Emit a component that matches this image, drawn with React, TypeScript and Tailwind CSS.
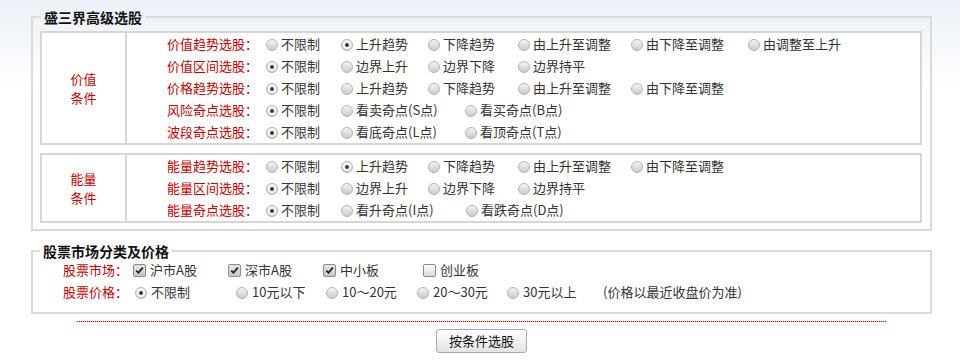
import React from 'react';

type Opt = [string, string];

interface CondRowProps {
  label: string;
  options: Opt[];
  checked: number;
}

const Radio: React.FC<{ checked?: boolean }> = ({ checked }) => (
  <span className="mr-[3px] mt-[2px] flex h-[12px] w-[12px] shrink-0 items-center justify-center rounded-full border border-[#b4b4b4] bg-linear-to-b from-[#f4f4f4] to-[#cbcbcb]">
    {checked && (
      <span className="flex h-[8px] w-[8px] items-center justify-center rounded-full bg-[#f6f6f6]">
        <span className="h-[4px] w-[4px] rounded-full bg-[#3c3c3c]" />
      </span>
    )}
  </span>
);

const Checkbox: React.FC<{ checked?: boolean }> = ({ checked }) => (
  <span
    className={`mr-[4px] mt-[1px] flex h-[13px] w-[13px] shrink-0 items-center justify-center rounded-[2px] border border-[#8c8c8c] bg-linear-to-b ${
      checked ? 'from-[#e6e6e6] to-[#c6c6c6]' : 'from-[#fbfbfb] to-[#dcdcdc]'
    }`}
  >
    {checked && (
      <svg width="9" height="9" viewBox="0 0 9 9">
        <path d="M1.3 4.6 L3.5 6.8 L7.8 1.6" stroke="#1e1e1e" strokeWidth="1.7" fill="none" />
      </svg>
    )}
  </span>
);

const CondRow: React.FC<CondRowProps> = ({ label, options, checked }) => (
  <div className="flex h-[22px] items-center whitespace-nowrap">
    <span className="w-[139px] shrink-0 pr-[8px] text-right text-[#cc0000]">{label}</span>
    {options.map(([text, w], i) => (
      <label key={text} className={`flex shrink-0 items-center ${w}`}>
        <Radio checked={i === checked} />
        <span>{text}</span>
      </label>
    ))}
  </div>
);

const CondGroup: React.FC<{ title: string[]; rows: CondRowProps[]; className?: string }> = ({
  title,
  rows,
  className = '',
}) => (
  <div className={`flex border-2 border-[#d6d6d6] bg-white ${className}`}>
    <div className="flex w-[85px] shrink-0 flex-col items-center justify-center border-r-2 border-[#d6d6d6] text-[#cc0000]">
      {title.map(t => (
        <span key={t} className="h-[19px] leading-[19px]">
          {t}
        </span>
      ))}
    </div>
    <div className="flex-1">
      {rows.map(r => (
        <CondRow key={r.label} {...r} />
      ))}
    </div>
  </div>
);

const valueRows: CondRowProps[] = [
  {
    label: '价值趋势选股：',
    checked: 1,
    options: [
      ['不限制', 'w-[75px]'],
      ['上升趋势', 'w-[87px]'],
      ['下降趋势', 'w-[90px]'],
      ['由上升至调整', 'w-[113px]'],
      ['由下降至调整', 'w-[117px]'],
      ['由调整至上升', ''],
    ],
  },
  {
    label: '价值区间选股：',
    checked: 0,
    options: [
      ['不限制', 'w-[75px]'],
      ['边界上升', 'w-[87px]'],
      ['边界下降', 'w-[90px]'],
      ['边界持平', ''],
    ],
  },
  {
    label: '价格趋势选股：',
    checked: 0,
    options: [
      ['不限制', 'w-[75px]'],
      ['上升趋势', 'w-[87px]'],
      ['下降趋势', 'w-[90px]'],
      ['由上升至调整', 'w-[113px]'],
      ['由下降至调整', ''],
    ],
  },
  {
    label: '风险奇点选股：',
    checked: 0,
    options: [
      ['不限制', 'w-[75px]'],
      ['看卖奇点(S点)', 'w-[124px]'],
      ['看买奇点(B点)', ''],
    ],
  },
  {
    label: '波段奇点选股：',
    checked: 0,
    options: [
      ['不限制', 'w-[75px]'],
      ['看底奇点(L点)', 'w-[124px]'],
      ['看顶奇点(T点)', ''],
    ],
  },
];

const energyRows: CondRowProps[] = [
  {
    label: '能量趋势选股：',
    checked: 1,
    options: [
      ['不限制', 'w-[75px]'],
      ['上升趋势', 'w-[87px]'],
      ['下降趋势', 'w-[90px]'],
      ['由上升至调整', 'w-[113px]'],
      ['由下降至调整', ''],
    ],
  },
  {
    label: '能量区间选股：',
    checked: 0,
    options: [
      ['不限制', 'w-[75px]'],
      ['边界上升', 'w-[87px]'],
      ['边界下降', 'w-[90px]'],
      ['边界持平', ''],
    ],
  },
  {
    label: '能量奇点选股：',
    checked: 0,
    options: [
      ['不限制', 'w-[75px]'],
      ['看升奇点(I点)', 'w-[125px]'],
      ['看跌奇点(D点)', ''],
    ],
  },
];

const markets: [string, string, boolean][] = [
  ['沪市A股', 'w-[95px]', true],
  ['深市A股', 'w-[95px]', true],
  ['中小板', 'w-[100px]', true],
  ['创业板', '', false],
];

const prices: Opt[] = [
  ['不限制', 'w-[101px]'],
  ['10元以下', 'w-[90px]'],
  ['10～20元', 'w-[91px]'],
  ['20～30元', 'w-[90px]'],
  ['30元以上', 'w-[96px]'],
];

const App: React.FC = () => {
  return (
    <div className="h-[360px] w-[960px] overflow-hidden bg-[linear-gradient(to_bottom,#ebf1f7,#ffffff_90px)] pt-[10px] font-['Noto_Sans_CJK_SC',sans-serif] text-[13px] text-[#333]">
      {/* 高级选股 */}
      <fieldset className="ml-[31px] w-[901px] border-2 border-[#dadada] pb-[6px] pl-[7px] pr-[8px] pt-[7px]">
        <legend className="ml-[1px] px-[3px] text-[14px] font-bold leading-[14px] text-[#111]">盛三界高级选股</legend>
        <CondGroup title={['价值', '条件']} rows={valueRows} />
        <CondGroup title={['能量', '条件']} rows={energyRows} className="mt-[8px]" />
      </fieldset>

      {/* 市场与价格 */}
      <fieldset className="ml-[31px] mt-[13px] w-[901px] border-2 border-[#dadada] pb-[10px] pl-[7px] pr-[8px]">
        <legend className="px-[3px] text-[14px] font-bold leading-[14px] text-[#111]">股票市场分类及价格</legend>
        <div className="ml-[23px] mt-[2px] flex h-[20px] items-center whitespace-nowrap">
          <span className="w-[70px] shrink-0 text-[#cc0000]">股票市场：</span>
          {markets.map(([text, w, on]) => (
            <label key={text} className={`flex shrink-0 items-center ${w}`}>
              <Checkbox checked={on} />
              <span>{text}</span>
            </label>
          ))}
        </div>
        <div className="ml-[23px] mt-[2px] flex h-[20px] items-center whitespace-nowrap">
          <span className="w-[72px] shrink-0 text-[#cc0000]">股票价格：</span>
          {prices.map(([text, w], i) => (
            <label key={text} className={`flex shrink-0 items-center ${w}`}>
              <Radio checked={i === 0} />
              <span className="ml-[1px]">{text}</span>
            </label>
          ))}
          <span>(价格以最近收盘价为准)</span>
        </div>
      </fieldset>

      <div className="ml-[31px] flex w-[901px] flex-col items-center">
        <div className="mt-[7px] h-px w-[810px] bg-[repeating-linear-gradient(to_right,#e00000_0_1px,#f3b0b0_1px_2px)]" />
        <button className="mt-[7px] h-[24px] w-[91px] rounded-[3px] border border-[#a9a9a9] bg-linear-to-b from-white to-[#e3e3e3] text-[13px] text-[#111]">
          按条件选股
        </button>
      </div>
    </div>
  );
};

export default App;
